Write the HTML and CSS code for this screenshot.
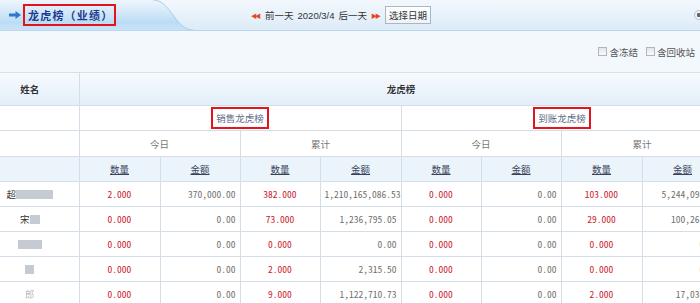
FILE: index.html
```html
<!DOCTYPE html>
<html lang="zh-CN">
<head>
  <meta charset="UTF-8">
  <title>龙虎榜（业绩）</title>
  <link rel="stylesheet" href="styles.css">
</head>
<body>
  <div class="topbar">
    <div class="tab">
      <svg class="tab-arrow" width="12" height="8" viewBox="0 0 12 8">
        <path d="M0 2.6 H6.5 V0 L12 4 L6.5 8 V5.4 H0 Z" fill="#2f78d0"/>
      </svg>
      <span class="page-title">龙虎榜（业绩）</span>
    </div>
    <svg class="tab-curve" width="40" height="30" viewBox="0 0 40 30">
      <defs>
        <linearGradient id="tabg" x1="0" y1="0" x2="0" y2="1">
          <stop offset="0" stop-color="#eef6fd"/>
          <stop offset="0.75" stop-color="#bcdcf5"/>
          <stop offset="1" stop-color="#c9e3f8"/>
        </linearGradient>
      </defs>
      <path d="M0 0 C18 0 22 30 40 30 L0 30 Z" fill="url(#tabg)"/>
      <path d="M0 0 C18 0 22 30 40 30" fill="none" stroke="#a8cceb" stroke-width="1"/>
    </svg>

    <div class="datenav">
      <span class="dbl">&#9664;&#9664;</span>
      <a class="daylink">前一天</a>
      <span class="date">2020/3/4</span>
      <a class="daylink">后一天</a>
      <span class="dbl next">&#9654;&#9654;</span>
      <button class="pick">选择日期</button>
    </div>
    <span class="radio"></span>
  </div>

  <div class="toolbar">
    <label class="check"><span class="box"></span>含冻结</label>
    <label class="check"><span class="box"></span>含回收站</label>
  </div>

  <table class="rank">
    <colgroup>
      <col class="c-name">
      <col class="c81"><col class="c80"><col class="c80"><col class="c81">
      <col class="c80"><col class="c80"><col class="c81"><col class="c81">
    </colgroup>
    <tr class="head1">
      <td class="name">姓名</td>
      <td colspan="8">龙虎榜</td>
    </tr>
    <tr class="head2">
      <td class="name"></td>
      <td colspan="4"><a class="boxed">销售龙虎榜</a></td>
      <td colspan="4"><a class="boxed">到账龙虎榜</a></td>
    </tr>
    <tr class="head3">
      <td class="name"></td>
      <td colspan="2">今日</td>
      <td colspan="2">累计</td>
      <td colspan="2">今日</td>
      <td colspan="2">累计</td>
    </tr>
    <tr class="head4">
      <td class="name"></td>
      <td><a>数量</a></td><td><a>金额</a></td>
      <td><a>数量</a></td><td><a>金额</a></td>
      <td><a>数量</a></td><td><a>金额</a></td>
      <td><a>数量</a></td><td><a>金额</a></td>
    </tr>

    <tr>
      <td class="name">超<span class="blur" style="width:37px"></span></td>
      <td class="qty">2.000</td><td class="amt">370,000.00</td>
      <td class="qty">382.000</td><td class="amt">1,210,165,086.53</td>
      <td class="qty">0.000</td><td class="amt">0.00</td>
      <td class="qty">103.000</td><td class="amt">5,244,098.10</td>
    </tr>
    <tr>
      <td class="name">宋<span class="blur" style="width:10px"></span></td>
      <td class="qty">0.000</td><td class="amt">0.00</td>
      <td class="qty">73.000</td><td class="amt">1,236,795.05</td>
      <td class="qty">0.000</td><td class="amt">0.00</td>
      <td class="qty">29.000</td><td class="amt">100,263.00</td>
    </tr>
    <tr>
      <td class="name"><span class="blur" style="width:24px"></span></td>
      <td class="qty">0.000</td><td class="amt">0.00</td>
      <td class="qty">0.000</td><td class="amt">0.00</td>
      <td class="qty">0.000</td><td class="amt">0.00</td>
      <td class="qty">0.000</td><td class="amt">0.00</td>
    </tr>
    <tr>
      <td class="name"><span class="blur" style="width:9px"></span></td>
      <td class="qty">0.000</td><td class="amt">0.00</td>
      <td class="qty">2.000</td><td class="amt">2,315.50</td>
      <td class="qty">0.000</td><td class="amt">0.00</td>
      <td class="qty">0.000</td><td class="amt">0.00</td>
    </tr>
    <tr>
      <td class="name"><span class="faint">郎</span></td>
      <td class="qty">0.000</td><td class="amt">0.00</td>
      <td class="qty">9.000</td><td class="amt">1,122,710.73</td>
      <td class="qty">0.000</td><td class="amt">0.00</td>
      <td class="qty">2.000</td><td class="amt">17,036.00</td>
    </tr>
  </table>
</body>
</html>
```

FILE: styles.css
```css
body {
  margin: 0;
  overflow: hidden;
  background: #fff;
  font-family: "Noto Sans CJK SC", "Noto Sans", sans-serif;
  font-size: 9.5px;
  color: #333;
}

/* top bar */
.topbar {
  display: flex;
  align-items: center;
  height: 30px;
  background: linear-gradient(#f3f8fd, #dcebf8);
  border-bottom: 1px solid #bcd6ec;
}

.tab {
  display: flex;
  align-items: center;
  width: 153px;
  height: 30px;
  background: linear-gradient(#eef6fd 0%, #bcdcf5 75%, #c9e3f8 100%);
}

.tab-arrow {
  margin-left: 9px;
  margin-right: 2px;
}

.page-title {
  display: inline-block;
  box-sizing: border-box;
  width: 93px;
  height: 22px;
  line-height: 18px;
  padding-left: 3px;
  border: 2px solid #e3141b;
  color: #1b3a8e;
  font-size: 11px;
  font-weight: bold;
  letter-spacing: 1.2px;
  white-space: nowrap;
}

.tab-curve {
  display: block;
}

.datenav {
  display: flex;
  align-items: center;
  margin-left: 58px;
  color: #333;
}

.dbl {
  color: #e8461c;
  font-size: 6px;
  letter-spacing: -2px;
  margin-right: 6px;
}

.dbl.next {
  margin-left: 4px;
  margin-right: 6px;
}

.daylink {
  color: #333;
}

.date {
  margin: 0 4px;
  font-family: "Liberation Sans", sans-serif;
  font-size: 9.5px;
}

.pick {
  box-sizing: border-box;
  width: 46px;
  height: 18px;
  padding: 0;
  border: 1px solid #a9b6c4;
  background: linear-gradient(#ffffff, #eef3f8);
  font-family: "Noto Sans CJK SC", sans-serif;
  font-size: 9.5px;
  color: #333;
}

.radio {
  margin-left: auto;
  margin-right: -4px;
  width: 8px;
  height: 8px;
  border-radius: 50%;
  border: 1px solid #b8c0c8;
  background: radial-gradient(#666 35%, #eef2f6 45%);
}

/* toolbar */
.toolbar {
  display: flex;
  justify-content: flex-end;
  align-items: center;
  gap: 8px;
  height: 41px;
  padding-right: 5px;
  background: #f3f8fd;
  border-bottom: 1px solid #d3e1ee;
}

.check {
  display: flex;
  align-items: center;
  color: #555;
}

.check .box {
  box-sizing: border-box;
  width: 9px;
  height: 9px;
  margin-right: 2px;
  border: 1px solid #b0b6bd;
  background: linear-gradient(#e4e7ea, #fafbfc);
}

/* table */
.rank {
  table-layout: fixed;
  width: 723px;
  border-collapse: collapse;
}

.c-name { width: 79px; }
.c80 { width: 80px; }
.c81 { width: 81px; }

.rank td {
  padding: 0 4px;
  height: 24px;
  border: 1px solid #d4dee8;
  text-align: center;
  white-space: nowrap;
  overflow: hidden;
}

.rank tr:first-child td {
  border-top: none;
}

.rank td:first-child {
  border-left: none;
}

.rank td.name {
  padding: 0 19px 0 0;
}

.head1 td {
  height: 32px;
  background: linear-gradient(#f6fafe, #e4eef9);
  color: #333;
  font-weight: bold;
}

.head2 td {
  height: 24px;
}

.head3 td {
  height: 25px;
  color: #777;
}

.head4 td {
  background: #ebf3fb;
}

.head4 a {
  color: #37425a;
  text-decoration: underline;
}

.boxed {
  display: inline-block;
  padding: 2px 3px;
  line-height: 14px;
  border: 2px solid #e3141b;
  color: #5e6c88;
}

.qty,
.amt {
  font-family: "Noto Sans Mono CJK SC", "Liberation Mono", monospace;
}

.qty {
  color: #c8202c;
}

.rank td.amt {
  text-align: right;
  color: #707070;
}

.blur {
  display: inline-block;
  height: 9px;
  vertical-align: -1px;
  background: #c6cad3;
  filter: blur(0.6px);
}

.faint {
  color: #b4b8c0;
  filter: blur(0.4px);
}
```
